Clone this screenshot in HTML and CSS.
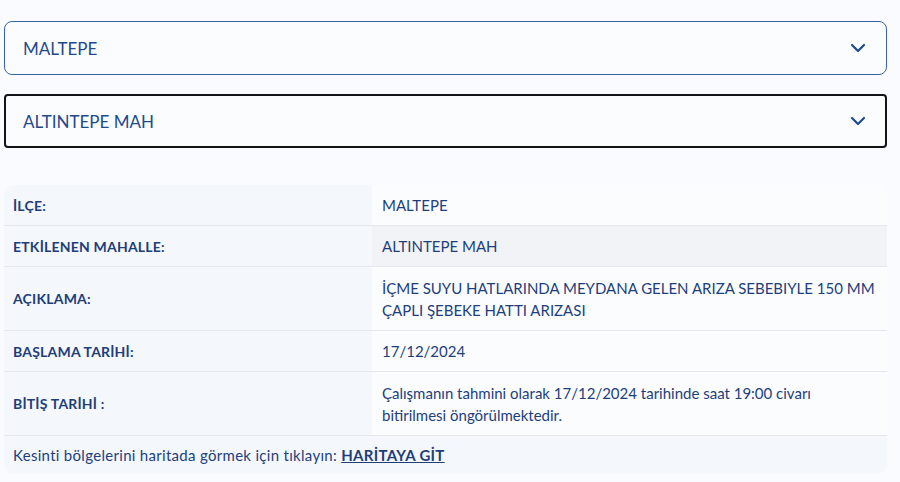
FILE: index.html
```html
<!DOCTYPE html>
<html lang="tr">
<head>
    <meta charset="UTF-8">
    <meta name="viewport" content="width=device-width, initial-scale=1.0">
    <title>Kesinti Bilgisi</title>
    <link rel="stylesheet" href="styles.css">
</head>
<body>
    <div class="container">
        <div class="select">
            <span>MALTEPE</span>
            <svg class="chevron" width="16" height="10" viewBox="0 0 16 10"><path d="M2 2l6 6 6-6" fill="none" stroke="#1d4a8c" stroke-width="2.2" stroke-linecap="round" stroke-linejoin="round"/></svg>
        </div>
        <div class="select active">
            <span>ALTINTEPE MAH</span>
            <svg class="chevron" width="16" height="10" viewBox="0 0 16 10"><path d="M2 2l6 6 6-6" fill="none" stroke="#1d4a8c" stroke-width="2.2" stroke-linecap="round" stroke-linejoin="round"/></svg>
        </div>

        <table class="info">
            <tr>
                <th>İLÇE:</th>
                <td>MALTEPE</td>
            </tr>
            <tr class="striped">
                <th>ETKİLENEN MAHALLE:</th>
                <td>ALTINTEPE MAH</td>
            </tr>
            <tr class="tall">
                <th>AÇIKLAMA:</th>
                <td>İÇME SUYU HATLARINDA MEYDANA GELEN ARIZA SEBEBIYLE 150 MM ÇAPLI ŞEBEKE HATTI ARIZASI</td>
            </tr>
            <tr>
                <th>BAŞLAMA TARİHİ:</th>
                <td>17/12/2024</td>
            </tr>
            <tr class="tall">
                <th>BİTİŞ TARİHİ :</th>
                <td>Çalışmanın tahmini olarak 17/12/2024 tarihinde saat 19:00 civarı bitirilmesi öngörülmektedir.</td>
            </tr>
            <tr class="footer">
                <td colspan="2">Kesinti bölgelerini haritada görmek için tıklayın: <a href="#">HARİTAYA GİT</a></td>
            </tr>
        </table>
    </div>
</body>
</html>
```

FILE: styles.css
```css
body {
    font-family: Lato, "Noto Sans", sans-serif;
    margin: 0;
    padding: 0;
    background-color: #fafbfe;
    color: #1d3f7b;
}
.container {
    width: 883px;
    padding: 21px 0 0 4px;
}
.select {
    display: flex;
    align-items: center;
    justify-content: space-between;
    height: 52px;
    padding: 0 20px 0 18px;
    border: 1px solid #3a62a3;
    border-radius: 8px;
    font-size: 17px;
    color: #1f4a8a;
    margin-bottom: 19px;
    background: #fbfcfe;
}
.select span {
    padding-top: 1px;
}
.select.active {
    height: 50px;
    border: 2px solid #131416;
    border-radius: 4px;
    padding-left: 17px;
    padding-right: 19px;
}
.info {
    width: 100%;
    margin-top: 37px;
    border-collapse: collapse;
    background: #f4f7fc;
    border-radius: 10px;
    overflow: hidden;
    font-size: 15px;
}
.info th {
    width: 350px;
    text-align: left;
    font-size: 14px;
    font-weight: 700;
    letter-spacing: 0.2px;
    padding: 0 9px;
    height: 40px;
    color: #1e3e78;
    border-bottom: 1px solid #e4e8ee;
}
.info td {
    background: #fbfcfe;
    padding: 0 10px;
    line-height: 22px;
    border-bottom: 1px solid #e4e8ee;
}
.info tr.striped td {
    background: #f2f3f6;
}
.info tr.tall th,
.info tr.tall td {
    height: 63px;
}
.info tr.footer td {
    background: #f4f7fc;
    border-bottom: none;
    height: 38px;
    padding: 0 9px;
    letter-spacing: 0.3px;
}
.info a {
    color: #1e3e78;
    font-weight: 700;
}
```
